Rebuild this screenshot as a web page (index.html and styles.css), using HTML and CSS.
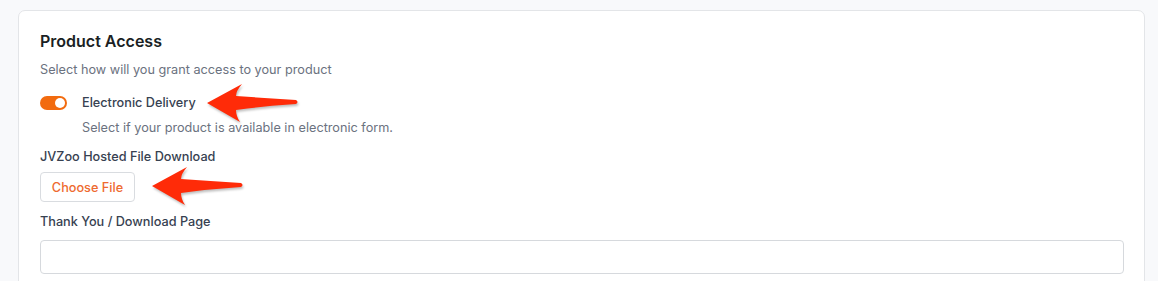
FILE: index.html
```html
<!DOCTYPE html>
<html lang="en">
<head>
    <meta charset="UTF-8">
    <meta name="viewport" content="width=device-width, initial-scale=1.0">
    <title>Product Access</title>
    <link rel="stylesheet" href="styles.css">
</head>
<body>
    <div class="card">
        <h2 class="card-title">Product Access</h2>
        <p class="card-desc">Select how will you grant access to your product</p>

        <div class="switch-row">
            <span class="switch"><span class="knob"></span></span>
            <div class="switch-text">
                <div class="switch-label">Electronic Delivery</div>
                <div class="switch-help">Select if your product is available in electronic form.</div>
            </div>
            <!-- arrow pointing at the toggle label -->
            <svg class="arrow arrow-one" width="96" height="40" viewBox="0 0 96 40">
                <path d="M2 20 L37 1 Q31 8 31 13 Q60 15 91 17 Q94 19 91 21 Q60 23 31 27 Q31 33 35 39 Z" fill="#ff2b08"/>
            </svg>
        </div>

        <div class="field">
            <label class="field-label">JVZoo Hosted File Download</label>
            <div class="upload-row">
                <button class="btn-file">Choose File</button>
                <svg class="arrow arrow-two" width="96" height="40" viewBox="0 0 96 40">
                    <path d="M2 20 L37 1 Q31 8 31 13 Q60 15 91 17 Q94 19 91 21 Q60 23 31 27 Q31 33 35 39 Z" fill="#ff2b08"/>
                </svg>
            </div>
        </div>

        <div class="field">
            <label class="field-label">Thank You / Download Page</label>
            <input class="text-input" type="text">
        </div>
    </div>
</body>
</html>
```
FILE: styles.css
```css
body {
    margin: 0;
    background-color: #f8f9fb;
    font-family: Inter, "Noto Sans", sans-serif;
    color: #1f2937;
}
.card {
    margin: 10px 13px 0 18px;
    padding: 20px 20px 30px 21px;
    background-color: #fff;
    border: 1px solid #e3e5e8;
    border-radius: 7px;
}
.card-title {
    margin: 0;
    font-size: 16px;
    font-weight: 600;
    line-height: 20px;
    color: #1b1f24;
}
.card-desc {
    margin: 10px 0 0;
    font-size: 12.7px;
    line-height: 18px;
    color: #6b7280;
}
.switch-row {
    position: relative;
    display: flex;
    align-items: flex-start;
    margin-top: 15px;
}
.switch {
    display: inline-block;
    position: relative;
    width: 27px;
    height: 14px;
    margin-top: 2px;
    border-radius: 7px;
    background-color: #f26b0f;
}
.switch .knob {
    position: absolute;
    top: 2px;
    right: 2px;
    width: 10px;
    height: 10px;
    border-radius: 50%;
    background-color: #fff;
}
.switch-text {
    margin-left: 15px;
}
.switch-label {
    font-size: 12.7px;
    font-weight: 500;
    line-height: 18px;
    color: #374151;
}
.switch-help {
    margin-top: 7px;
    font-size: 12.7px;
    line-height: 18px;
    color: #6b7280;
}
.field {
    margin-top: 11px;
}
.field-label {
    display: block;
    font-size: 12.7px;
    font-weight: 500;
    line-height: 18px;
    color: #374151;
}
.upload-row {
    position: relative;
    display: flex;
    margin-top: 6px;
}
.btn-file {
    box-sizing: border-box;
    width: 95px;
    height: 30px;
    padding: 0;
    white-space: nowrap;
    font-family: inherit;
    font-size: 12.7px;
    font-weight: 500;
    color: #ee6a2f;
    background-color: #fff;
    border: 1px solid #d9dce0;
    border-radius: 4px;
}
.text-input {
    display: block;
    box-sizing: border-box;
    width: 100%;
    height: 34px;
    margin-top: 9px;
    border: 1px solid #d6d9dd;
    border-radius: 4px;
}
/* red call-out arrows drawn over the form */
.arrow {
    position: absolute;
    filter: drop-shadow(1px 2px 1px rgba(0, 0, 0, 0.25));
}
.arrow-one {
    left: 165px;
    top: -11px;
}
.arrow-two {
    left: 110px;
    top: -6px;
}
```
